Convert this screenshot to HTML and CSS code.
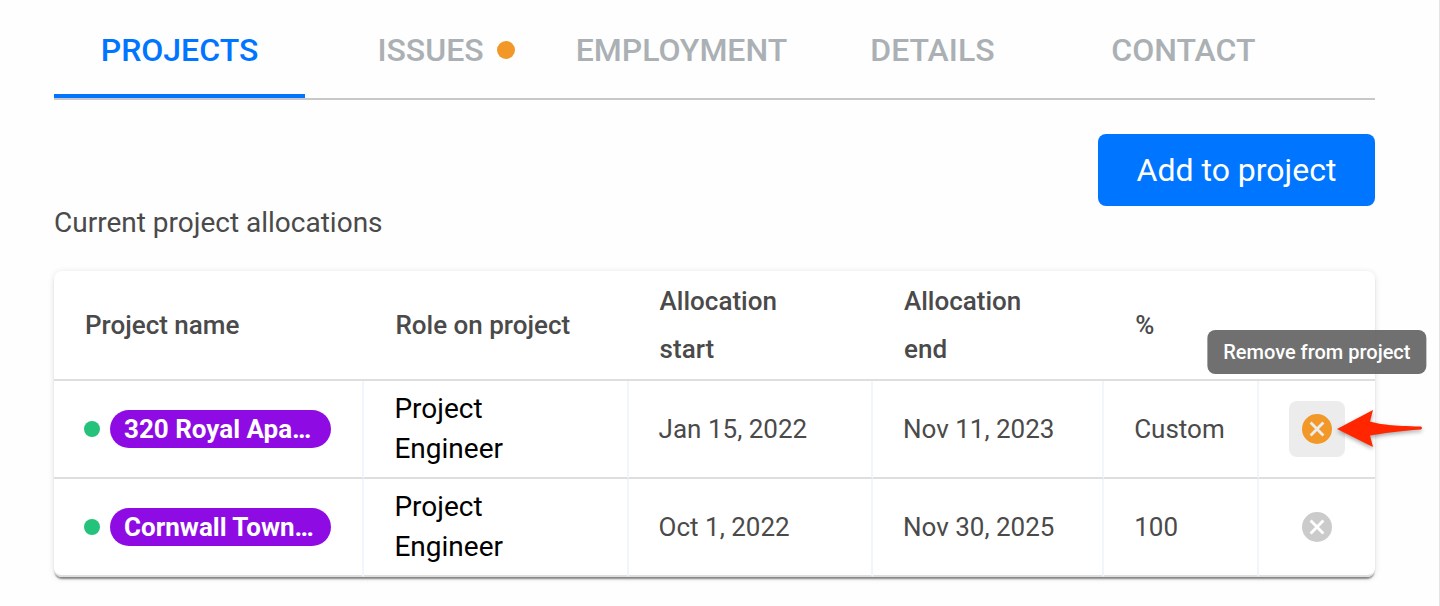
FILE: index.html
```html
<!DOCTYPE html>
<html lang="en">
<head>
    <meta charset="UTF-8">
    <meta name="viewport" content="width=device-width, initial-scale=1.0">
    <title>Project allocations</title>
    <link rel="stylesheet" href="styles.css">
</head>
<body>
    <main class="panel">
        <nav class="tabs">
            <a class="tab active" href="#projects">PROJECTS</a>
            <a class="tab" href="#issues"><span class="tab-label">ISSUES<span class="tab-dot"></span></span></a>
            <a class="tab" href="#employment">EMPLOYMENT</a>
            <a class="tab" href="#details">DETAILS</a>
            <a class="tab" href="#contact">CONTACT</a>
        </nav>

        <div class="toolbar">
            <h2 id="allocations-title">Current project allocations</h2>
            <button class="add-button" type="button">Add to project</button>
        </div>

        <table class="allocations" aria-labelledby="allocations-title">
            <colgroup>
                <col class="col-name">
                <col class="col-role">
                <col class="col-start">
                <col class="col-end">
                <col class="col-percent">
                <col class="col-action">
            </colgroup>
            <thead>
                <tr>
                    <th>Project name</th>
                    <th>Role on project</th>
                    <th>Allocation start</th>
                    <th>Allocation end</th>
                    <th>%</th>
                    <th></th>
                </tr>
            </thead>
            <tbody>
                <tr>
                    <td>
                        <div class="project">
                            <span class="status"></span>
                            <a class="pill" href="#royal">320 Royal Apa…</a>
                        </div>
                    </td>
                    <td class="role">Project Engineer</td>
                    <td>Jan 15, 2022</td>
                    <td>Nov 11, 2023</td>
                    <td>Custom</td>
                    <td class="action">
                        <div class="remove-wrap">
                            <button class="remove hovered" type="button" aria-labelledby="remove-tip">
                                <svg width="30" height="30" viewBox="0 0 30 30">
                                    <circle cx="15" cy="15" r="15" fill="currentColor"/>
                                    <path d="M8.6 8.6l12.8 12.8M21.4 8.6L8.6 21.4" stroke="#ececec" stroke-width="2.8"/>
                                </svg>
                            </button>
                            <span class="tooltip" id="remove-tip" role="tooltip">Remove from project</span>
                            <svg class="arrow" width="90" height="44" viewBox="0 0 90 44" aria-hidden="true">
                                <path d="M2 22L38 3L35 14.5C45 17.5 58 19 86 19.5Q88 21 86 22.5C65 24 47 26.5 35 28.5L38 40Z" fill="#ff2600"/>
                            </svg>
                        </div>
                    </td>
                </tr>
                <tr>
                    <td>
                        <div class="project">
                            <span class="status"></span>
                            <a class="pill" href="#cornwall">Cornwall Town…</a>
                        </div>
                    </td>
                    <td class="role">Project Engineer</td>
                    <td>Oct 1, 2022</td>
                    <td>Nov 30, 2025</td>
                    <td>100</td>
                    <td class="action">
                        <div class="remove-wrap">
                            <button class="remove" type="button" aria-labelledby="remove-tip">
                                <svg width="30" height="30" viewBox="0 0 30 30">
                                    <circle cx="15" cy="15" r="15" fill="currentColor"/>
                                    <path d="M8.6 8.6l12.8 12.8M21.4 8.6L8.6 21.4" stroke="#fff" stroke-width="2.8"/>
                                </svg>
                            </button>
                        </div>
                    </td>
                </tr>
            </tbody>
        </table>
    </main>
</body>
</html>
```
FILE: styles.css
```css
* {
    box-sizing: border-box;
}
body {
    margin: 0;
    font-family: Roboto, 'Liberation Sans', sans-serif;
    font-size: 26px;
    color: #4a4a4a;
    background-color: #fefefe;
}
a {
    text-decoration: none;
}
button {
    border: 0;
    font: inherit;
    cursor: pointer;
}
.panel {
    min-height: 100vh;
    padding: 0 64px 24px 54px;
    border-right: 1px solid #e4e4e4;
}

/* tabs */
.tabs {
    display: flex;
    border-bottom: 2px solid #c8c8c8;
}
.tab {
    width: 19%;
    padding: 30px 0 24px;
    border-bottom: 4px solid transparent;
    font-size: 32px;
    font-weight: 500;
    line-height: 40px;
    text-align: center;
    color: #aab0b4;
}
.tab.active {
    color: #0075ff;
    border-bottom-color: #0075ff;
}
.tab-label {
    position: relative;
}
.tab-dot {
    position: absolute;
    top: 50%;
    left: 100%;
    width: 18px;
    height: 18px;
    margin: -9px 0 0 13px;
    border-radius: 50%;
    background-color: #f29829;
}

/* toolbar */
.toolbar {
    display: flex;
    justify-content: space-between;
    align-items: flex-start;
    padding-top: 34px;
}
.toolbar h2 {
    margin: 0;
    padding: 69px 0 28px;
    font-size: 28px;
    font-weight: 400;
    line-height: 40px;
}
.add-button {
    min-width: 277px;
    padding: 16px 32px;
    border-radius: 8px;
    font-size: 32px;
    line-height: 40px;
    color: #fff;
    background-color: #0075ff;
}

/* allocations table */
.allocations {
    width: 100%;
    table-layout: fixed;
    border-collapse: separate;
    border-spacing: 0;
    border-radius: 8px;
    background-color: #fff;
    box-shadow: 0 3px 2px -1px rgba(0, 0, 0, 0.45), 0 1px 6px rgba(0, 0, 0, 0.12);
}
.col-name {
    width: 23.5%;
}
.col-role {
    width: 20%;
}
.col-start {
    width: 18.5%;
}
.col-end {
    width: 17.5%;
}
.col-percent {
    width: 11.7%;
}
th,
td {
    border-bottom: 2px solid #dedede;
    text-align: left;
    vertical-align: middle;
}
th {
    padding: 6px 48px 6px 31px;
    font-weight: 500;
    line-height: 48px;
}
td {
    padding: 8px 31px 8px 30px;
    border-right: 2px solid #f0f6fc;
    line-height: 40px;
}
td:last-child {
    border-right: 0;
}
tbody tr:last-child td:first-child {
    border-bottom-left-radius: 8px;
}
tbody tr:last-child td:last-child {
    border-bottom-right-radius: 8px;
}
.role {
    font-size: 28px;
    color: #000;
}
.project {
    display: flex;
    align-items: center;
    gap: 10px;
}
.status {
    flex: none;
    width: 16px;
    height: 16px;
    border-radius: 50%;
    background-color: #24c27a;
}
.pill {
    flex: 1;
    padding: 0 14px;
    border-radius: 19px;
    font-weight: 700;
    line-height: 38px;
    white-space: nowrap;
    color: #fff;
    background-color: #8e0ce3;
}
td.action {
    padding: 8px 0;
}
.remove-wrap {
    position: relative;
    width: 56px;
    margin: 0 auto;
}
.remove {
    display: flex;
    justify-content: center;
    align-items: center;
    width: 56px;
    height: 56px;
    padding: 0;
    border-radius: 8px;
    color: #cbcbcb;
    background-color: transparent;
}
.remove.hovered {
    color: #f29829;
    background-color: #ececec;
}
.tooltip {
    position: absolute;
    bottom: calc(100% + 27px);
    left: 50%;
    transform: translateX(-50%);
    padding: 0 16px;
    border-radius: 8px;
    font-size: 20px;
    font-weight: 500;
    line-height: 44px;
    white-space: nowrap;
    color: #fff;
    background-color: rgba(97, 97, 97, 0.9);
}
.arrow {
    position: absolute;
    top: 6px;
    left: 46px;
    filter: drop-shadow(0 2px 2px rgba(0, 0, 0, 0.35));
}
```
